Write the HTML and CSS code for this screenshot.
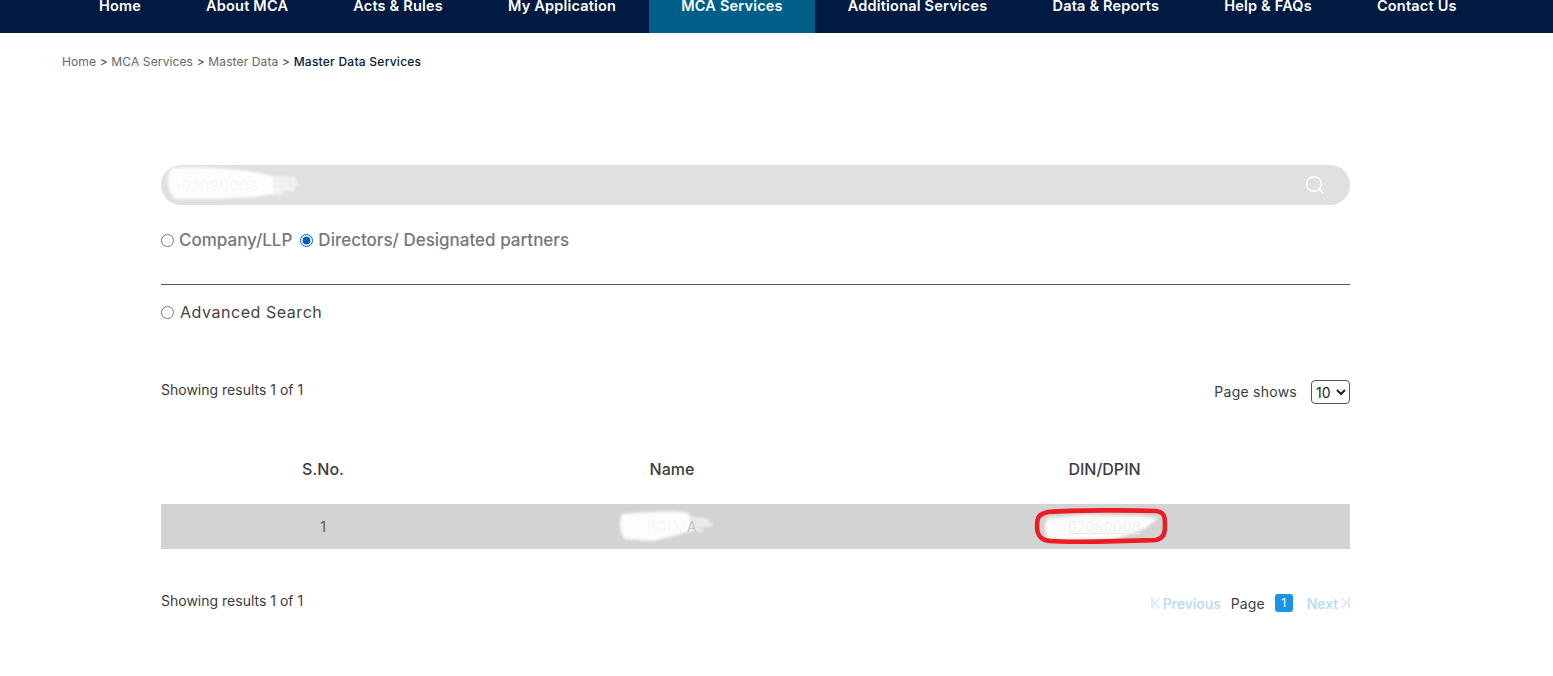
FILE: index.html
```html
<!DOCTYPE html>
<html lang="en">
<head>
<meta charset="utf-8">
<title>Master Data Services</title>
<link rel="stylesheet" href="styles.css">
</head>
<body>
<nav class="nav">
  <a class="nav-item">Home</a>
  <a class="nav-item">About MCA</a>
  <a class="nav-item">Acts &amp; Rules</a>
  <a class="nav-item">My Application</a>
  <a class="nav-item active">MCA Services</a>
  <a class="nav-item">Additional Services</a>
  <a class="nav-item">Data &amp; Reports</a>
  <a class="nav-item">Help &amp; FAQs</a>
  <a class="nav-item">Contact Us</a>
</nav>
<div class="crumbs">
  <span>Home</span><i>&gt;</i><span>MCA Services</span><i>&gt;</i><span>Master Data</span><i>&gt;</i><b>Master Data Services</b>
</div>
<main class="content">
  <div class="search">
    <svg class="smear smear-search" viewBox="0 0 150 50" aria-hidden="true"><defs><filter id="b1" x="-10%" y="-30%" width="120%" height="160%"><feGaussianBlur stdDeviation="1.5"/></filter></defs><g filter="url(#b1)" fill="#fff" fill-opacity=".95"><path d="M10 8 C30 6 70 8 100 13 L112 17 L112 33 L95 37 L50 39 L14 39 C6 30 5 18 10 8Z"/></g><g filter="url(#b1)" stroke="#fff" stroke-opacity=".85" stroke-width="3" fill="none"><path d="M100 18 L135 19"/><path d="M100 23 L137 24"/><path d="M100 28 L134 29"/><path d="M100 32 L122 33"/></g></svg>
    <span class="search-value">07080008</span>
    <svg class="search-icon" width="20" height="20" viewBox="0 0 20 20" fill="none" stroke="#fff" stroke-width="1.4" aria-hidden="true"><circle cx="9" cy="9" r="7.3"/><path d="M14.4 14.4 L18 18" stroke-linecap="round"/></svg>
  </div>
  <div class="radios">
    <label class="radio"><input type="radio" name="kind"><span>Company/LLP</span></label>
    <label class="radio"><input type="radio" name="kind" checked><span>Directors/ Designated partners</span></label>
  </div>
  <hr class="rule">
  <label class="advanced"><input type="radio"><span>Advanced Search</span></label>
  <div class="results-top">
    <span class="count">Showing results 1 of 1</span>
    <div class="page-shows"><span class="page-label">Page shows</span><select class="size"><option>10</option></select></div>
  </div>
  <table class="table">
    <thead><tr><th class="c1">S.No.</th><th class="c2">Name</th><th class="c3">DIN/DPIN</th></tr></thead>
    <tbody>
      <tr>
        <td class="num">1</td>
        <td><div class="cell-wrap">
          <svg class="smear smear-name" viewBox="0 0 110 40" aria-hidden="true"><defs><filter id="b2" x="-10%" y="-30%" width="120%" height="160%"><feGaussianBlur stdDeviation="1.8"/></filter></defs><path d="M9 9 C35 7 60 5 76 8 L78 26 L60 31 L40 36 L12 34 C6 27 6 16 9 9Z" fill="#fff" fill-opacity=".95" filter="url(#b2)"/><g filter="url(#b2)" stroke="#fff" stroke-opacity=".8" stroke-width="3" fill="none"><path d="M74 13 L96 16"/><path d="M74 19 L99 20"/><path d="M74 24 L90 25"/></g></svg>
          <span class="faint">POOJ<span class="last-letter">A</span></span></div></td>
        <td><div class="cell-wrap">
          <svg class="mark" viewBox="0 0 136 40" aria-hidden="true"><defs><filter id="b3" x="-10%" y="-30%" width="120%" height="160%"><feGaussianBlur stdDeviation="1.6"/></filter></defs><path d="M14 10 L50 7 L105 8 L124 10 L112 20 L100 25 L80 31 L40 32 L14 30 C10 24 10 15 14 10Z" fill="#fff" fill-opacity=".93" filter="url(#b3)"/><path d="M14 4 C40 2 100 2 122 3 C130 4 131 8 131 17 C131 27 129 30 122 32 C90 33 40 35 16 33 C6 32 3 27 3 18 C3 9 5 6 14 4Z" fill="none" stroke="#ed1c24" stroke-width="4.6"/></svg>
          <span class="faint din">07080008</span></div></td>
      </tr>
    </tbody>
  </table>
  <div class="results-bottom">
    <span class="count">Showing results 1 of 1</span>
    <div class="pager">
      <span class="pager-link"><svg width="10" height="12" viewBox="0 0 10 12" fill="none" stroke="currentColor" aria-hidden="true"><path d="M1 .5V11.5M9 .5L3 6L9 11.5"/></svg>Previous</span>
      <span class="pager-page">Page</span>
      <span class="pager-num">1</span>
      <span class="pager-link next">Next<svg width="10" height="12" viewBox="0 0 10 12" fill="none" stroke="currentColor" aria-hidden="true"><path d="M9 .5V11.5M1 .5L7 6L1 11.5"/></svg></span>
    </div>
  </div>
</main>
</body>
</html>
```
FILE: styles.css
```css
* { box-sizing: border-box; }
html, body { margin: 0; padding: 0; background: #fff; }
body { font-family: Inter, "Open Sans", sans-serif; color: #3c3c3c; height: 676px; overflow: hidden; }

.nav { display: flex; gap: 1px; height: 33px; padding-left: 67px; background: #001a41; }
.nav-item { padding: 0 32px; color: #fff; font-size: 14.5px; font-weight: 600; letter-spacing: .2px; line-height: 12px; white-space: nowrap; }
.nav-item.active { background: #005f88; }

.crumbs { display: flex; align-items: center; gap: 3.6px; height: 16px; margin: 20px 0 0 62px; font-size: 12px; letter-spacing: .12px; color: #666; }
.crumbs i { font-style: normal; color: #444; }
.crumbs b { font-weight: 500; letter-spacing: .25px; color: #001a41; }

.content { width: 1189px; margin: 0 0 0 161px; padding-top: 96px; }

.search { position: relative; display: flex; align-items: center; justify-content: space-between; height: 40px; padding: 0 25px 0 21px; border-radius: 20px; background: #e0e0e0; overflow: hidden; }
.search-value { position: relative; font-size: 14px; color: #f7f7f7; letter-spacing: 1px; }
.smear { position: absolute; }
.smear-search { left: 0; top: -5px; width: 150px; height: 50px; }

.radios { display: flex; align-items: center; gap: 8px; height: 20px; margin-top: 25px; }
.radio, .advanced { display: flex; align-items: center; font-size: 17px; font-weight: 500; color: #777; }
.radio input, .advanced input { width: 13px; height: 13px; margin: 0 5px 0 0; accent-color: #0060c0; }

.rule { height: 1px; margin: 34px 0 0; border: 0; background: #4d5c6b; }

.advanced { margin-top: 17px; height: 20px; font-size: 16px; font-weight: 400; color: #444; letter-spacing: .55px; }
.advanced input { margin-right: 6px; }

.results-top { display: flex; justify-content: space-between; align-items: flex-start; margin-top: 58px; height: 24px; }
.count { font-size: 14px; line-height: 20px; color: #3c3c3c; }
.page-shows { display: flex; align-items: center; gap: 14px; font-size: 14px; letter-spacing: .25px; }
.page-label { margin-bottom: 1px; }
.size { width: 39px; height: 24px; padding: 0; font-family: inherit; font-size: 14px; color: #222; background: #fff; border: 1px solid #555; border-radius: 4px; }

.table { width: 100%; margin-top: 41px; border-collapse: collapse; table-layout: fixed; }
.c1 { width: 324px; }
.c2 { width: 374px; }
.table th { height: 59px; padding: 0 0 12px; font-size: 16px; font-weight: 500; color: #3c3c3c; text-align: center; }
.table td { height: 45px; padding: 0; background: #d3d3d3; font-size: 14px; text-align: center; }
.table .num { color: #5c5c3e; }
.cell-wrap { position: relative; }
.faint { position: relative; font-size: 14px; letter-spacing: .6px; color: #f6f6f6; }
.last-letter { color: #c4c4c4; }
.din { letter-spacing: .5px; color: #f2f2f2; text-decoration: underline; text-decoration-color: #ececec; }
.smear-name { left: 128px; top: -13px; width: 110px; height: 40px; }
.mark { position: absolute; left: 175px; top: -10px; width: 136px; height: 40px; }

.results-bottom { display: flex; justify-content: space-between; align-items: center; margin-top: 40px; height: 24px; }
.pager { display: flex; align-items: center; font-size: 14px; padding-top: 4px; }
.pager-link { display: flex; align-items: center; gap: 2px; color: #b4daf6; font-weight: 500; }
.pager-page { margin-left: 10px; color: #444; letter-spacing: .1px; }
.pager-num { width: 18px; height: 18px; margin-left: 10px; border-radius: 3px; background: #1a94e6; color: #fff; text-align: center; font-size: 12px; line-height: 18px; }
.next { margin-left: 14px; }
```
